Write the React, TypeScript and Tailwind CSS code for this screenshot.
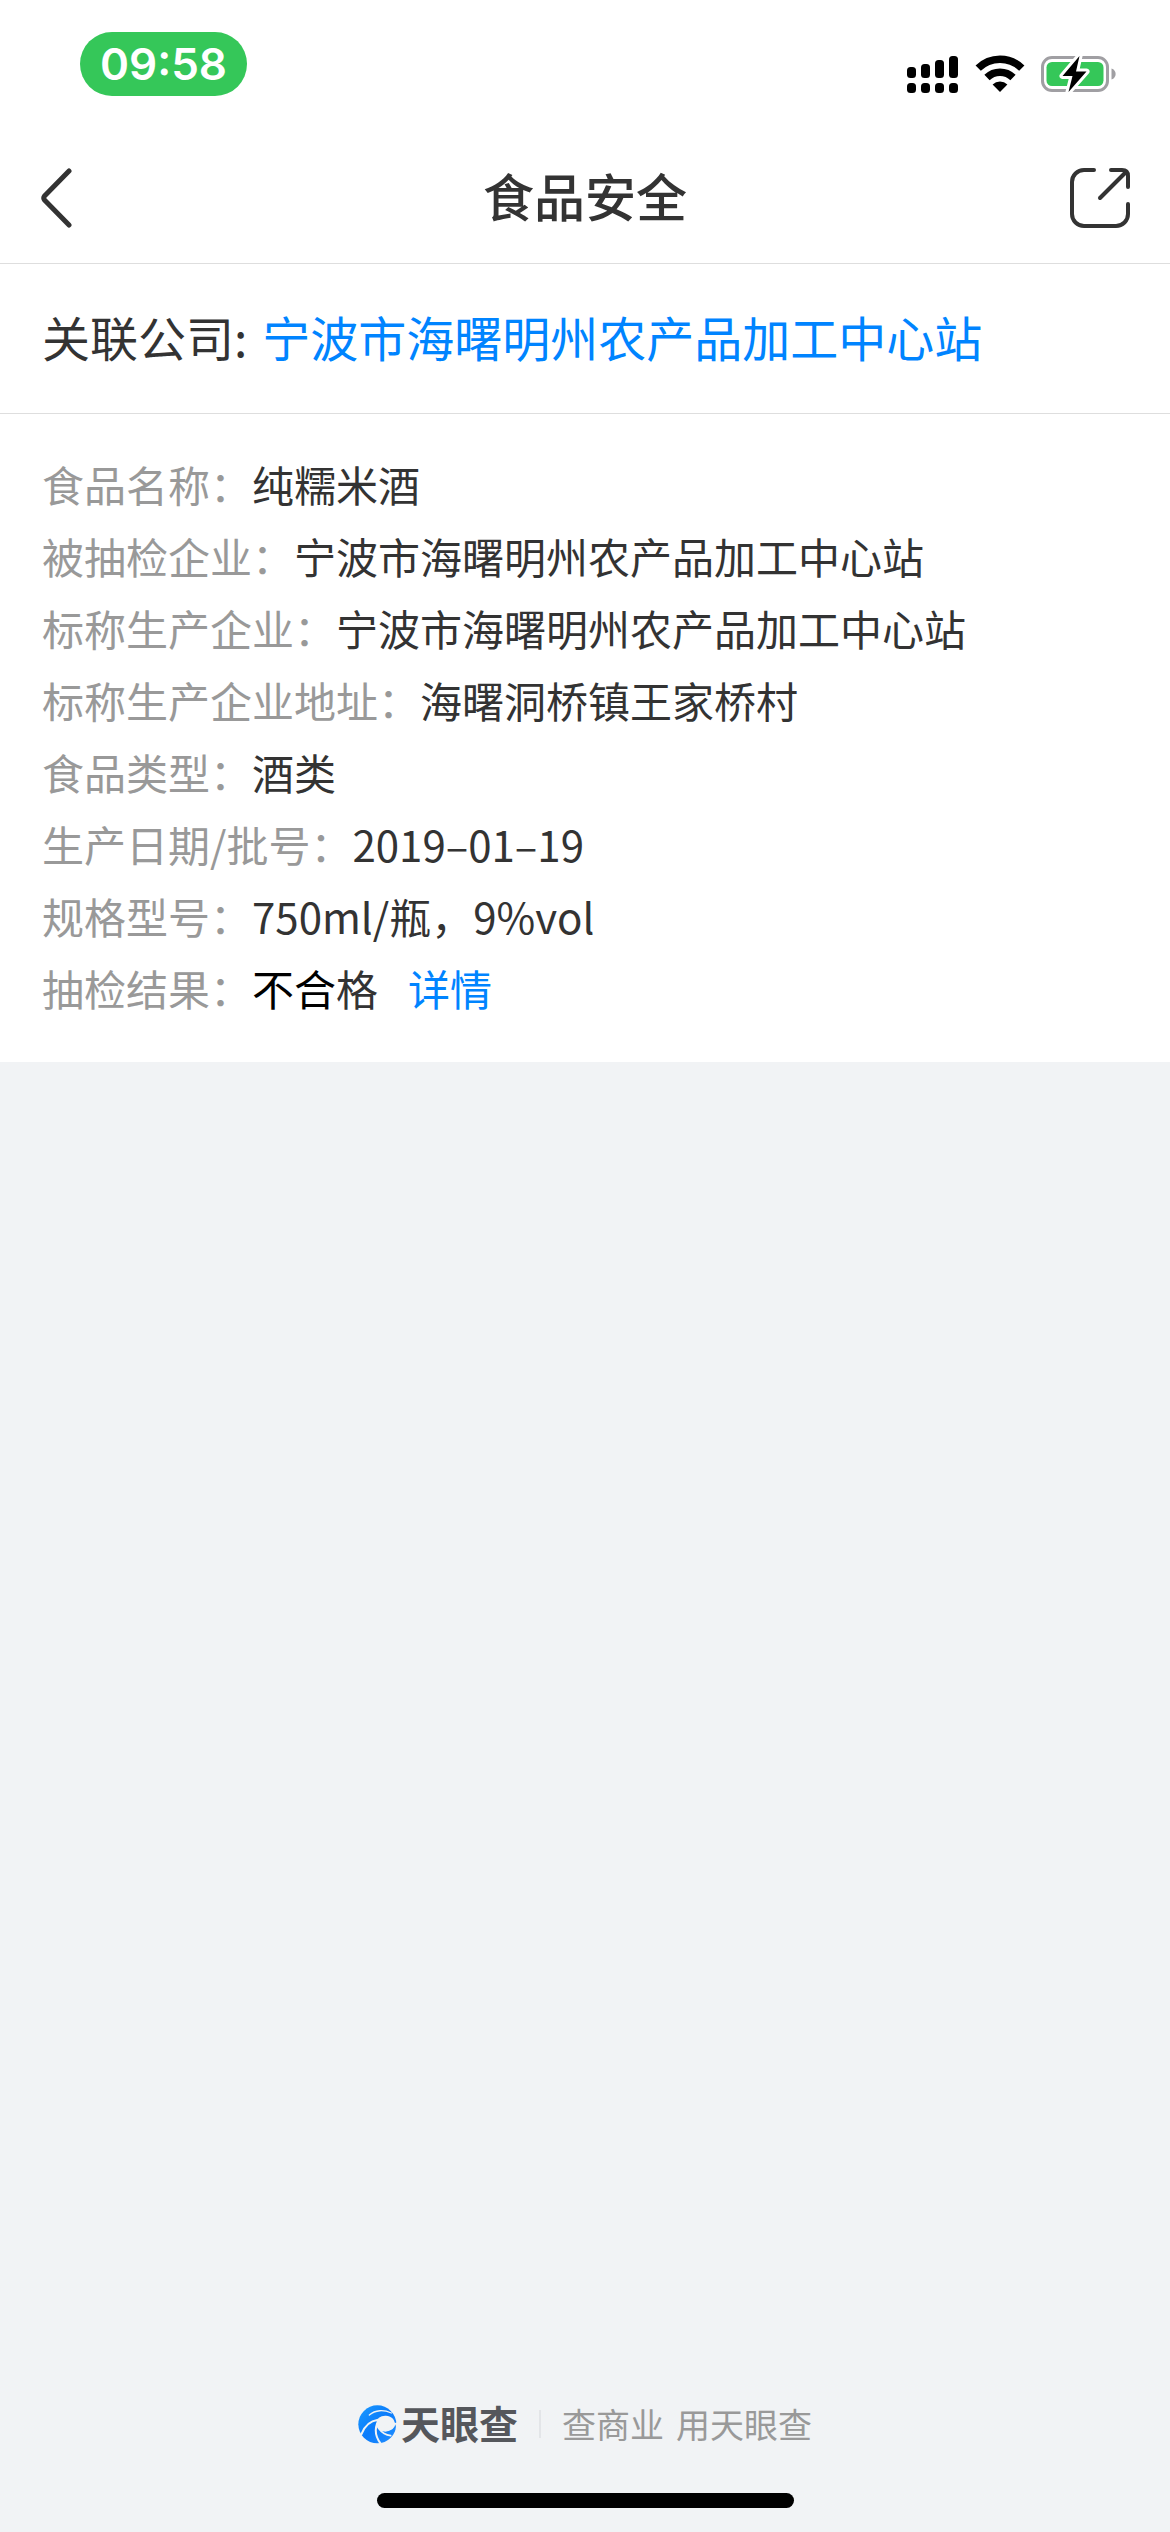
import type { ReactNode } from 'react'

const foodInfo: { label: string; value: ReactNode }[] = [
  { label: '食品名称', value: '纯糯米酒' },
  { label: '被抽检企业', value: '宁波市海曙明州农产品加工中心站' },
  { label: '标称生产企业', value: '宁波市海曙明州农产品加工中心站' },
  { label: '标称生产企业地址', value: '海曙洞桥镇王家桥村' },
  { label: '食品类型', value: '酒类' },
  { label: '生产日期/批号', value: '2019–01–19' },
  { label: '规格型号', value: '750ml/瓶，9%vol' },
  {
    label: '抽检结果',
    value: (
      <>
        <span className="text-black">不合</span>格
        <a href="#detail" className="ml-[30px] text-[#0084ff]">
          详情
        </a>
      </>
    ),
  },
]

function SignalIcon() {
  return (
    <svg width="52" height="38" viewBox="0 0 52 38" aria-hidden="true">
      <rect x="0" y="12" width="9" height="11" rx="3.5" />
      <rect x="14" y="9" width="9" height="14" rx="3.5" />
      <rect x="28" y="5" width="9" height="18" rx="3.5" />
      <rect x="42" y="1" width="9" height="22" rx="3.5" />
      <rect x="0" y="28" width="9" height="10" rx="3.5" />
      <rect x="14" y="28" width="9" height="10" rx="3.5" />
      <rect x="28" y="28" width="9" height="10" rx="3.5" />
      <rect x="42" y="28" width="9" height="10" rx="3.5" />
    </svg>
  )
}

function WifiIcon() {
  return (
    <svg width="50" height="38" viewBox="0 0 50 38" fill="none" stroke="black" aria-hidden="true">
      <path d="M3.2 13.2 A31 31 0 0 1 46.8 13.2" strokeWidth="7.5" />
      <path d="M12 22.5 A18.5 18.5 0 0 1 38 22.5" strokeWidth="7.5" />
      <path d="M25 37 L17.6 29.6 A10.5 10.5 0 0 1 32.4 29.6 Z" fill="black" stroke="none" />
    </svg>
  )
}

function BatteryIcon() {
  return (
    <svg width="75" height="38" viewBox="0 0 75 38" aria-hidden="true">
      <rect x="1.5" y="2.5" width="65" height="33" rx="9.5" fill="none" stroke="#a09fa3" strokeWidth="3" />
      <path d="M70.5 13.5 C76 15 76 23 70.5 24.5 Z" fill="#a09fa3" />
      <rect x="5.5" y="7" width="57" height="24" rx="5.5" fill="#35c759" />
      <path
        d="M38.5 1 L21.5 21 H31.5 L27.5 37 L45.5 16.5 H35 Z"
        fill="black"
        stroke="white"
        strokeWidth="6"
        strokeLinejoin="round"
        paintOrder="stroke"
      />
    </svg>
  )
}

function BackIcon() {
  return (
    <svg width="32" height="60" viewBox="0 0 32 60" fill="none" stroke="#333333" strokeWidth="5" strokeLinecap="round" strokeLinejoin="round" aria-hidden="true">
      <path d="M29 3 L4.5 28 Q3 30 4.5 32 L29 57" />
    </svg>
  )
}

function ShareIcon() {
  return (
    <svg width="60" height="60" viewBox="0 0 60 60" fill="none" stroke="#333333" strokeWidth="4" strokeLinecap="round" strokeLinejoin="round" aria-hidden="true">
      <path d="M24 2 H14 A12 12 0 0 0 2 14 V46 A12 12 0 0 0 14 58 H46 A12 12 0 0 0 58 46 V36" />
      <path d="M41 2 H52 Q58 2 58 8 V19" />
      <path d="M30 30 L55 5" />
    </svg>
  )
}

function BrandMark() {
  return (
    <svg width="39" height="39" viewBox="0 0 117 117" fill="none" aria-hidden="true">
      <defs>
        <linearGradient id="brand" x1="0" y1="0" x2="1" y2="1">
          <stop offset="0" stopColor="#1c9bff" />
          <stop offset="0.5" stopColor="#0a7bfb" />
          <stop offset="1" stopColor="#2590ff" />
        </linearGradient>
      </defs>
      <circle cx="58" cy="58" r="57" fill="url(#brand)" />
      {/* eye opening to the right */}
      <path d="M55 58 C54 40 68 31 84 32 C100 33 108 42 111 54 L118 52 V66 C110 74 100 80 84 80 C68 80 56 74 55 58 Z" fill="#f1f3f5" />
      <path d="M84 80 C102 78 110 68 112 58 L114 66 C112 74 104 84 92 88 Z" fill="#1588ff" />
      <g stroke="#f1f3f5" strokeLinecap="round">
        <path d="M34 30 C52 14 78 14 100 24" strokeWidth="4" />
        <path d="M10 88 C18 66 32 48 60 44" strokeWidth="6" />
        <path d="M57 56 C50 76 54 98 68 116" strokeWidth="6" />
        <path d="M64 72 C72 84 82 90 98 92" strokeWidth="5" />
      </g>
    </svg>
  )
}

export default function App() {
  return (
    <div
      lang="zh-CN"
      className="flex min-h-screen flex-col bg-[#f1f3f5] font-['Noto_Sans_CJK_SC',sans-serif] text-[#333333]"
    >
      <header className="border-b border-[#dedede] bg-white">
        {/* Status bar */}
        <div className="flex items-start justify-between pt-8 pr-[54px] pl-20">
          <time className="flex h-16 w-[167px] items-center justify-center rounded-full bg-[#35c759] font-[Inter,sans-serif] text-[44px] font-semibold text-white">
            09:58
          </time>
          <div className="flex items-center gap-4 pt-[23px]">
            <SignalIcon />
            <WifiIcon />
            <BatteryIcon />
          </div>
        </div>

        {/* Title bar */}
        <div className="mt-9 flex h-[131px] items-center justify-between px-10">
          <button type="button" aria-label="返回" className="flex w-[60px] justify-start">
            <BackIcon />
          </button>
          <h1 className="pb-1 text-[51px] font-medium">食品安全</h1>
          <button type="button" aria-label="分享">
            <ShareIcon />
          </button>
        </div>
      </header>

      <main className="bg-white">
        <p className="border-b border-[#dedede] px-[42px] pt-[38px] pb-[42px] text-[48px] leading-[69px]">
          关联公司:{' '}
          <a href="#company" className="ml-1 text-[#0084ff]">
            宁波市海曙明州农产品加工中心站
          </a>
        </p>

        <dl className="px-[42px] pt-[34px] pb-[38px] text-[42px] leading-[72px]">
          {foodInfo.map((item) => (
            <div key={item.label} className="flex">
              <dt className="shrink-0 text-[#999999]">{item.label}：</dt>
              <dd>{item.value}</dd>
            </div>
          ))}
        </dl>
      </main>

      <footer className="mt-auto flex flex-col items-center pb-6">
        <div className="flex items-center">
          <BrandMark />
          <span className="ml-1 pb-1 text-[39px] leading-[46px] font-bold text-[#55575c]">天眼查</span>
          <span className="mx-[21px] h-7 w-0.5 bg-[#e3e5e8]" />
          <span className="flex gap-3 text-[34px] leading-[50px] text-[#999999]">
            <span>查商业</span>
            <span>用天眼查</span>
          </span>
        </div>
        {/* Home indicator */}
        <div className="mt-11 h-[15px] w-[417px] rounded-full bg-black" />
      </footer>
    </div>
  )
}
